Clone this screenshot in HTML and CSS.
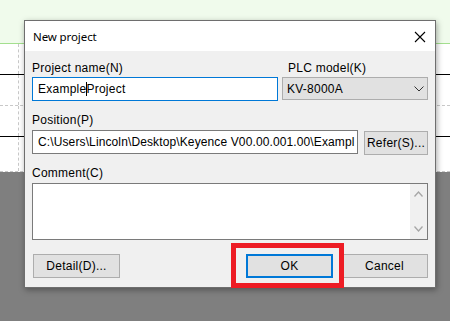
FILE: index.html
```
<!DOCTYPE html>
<html lang="en">
<head>
    <meta charset="UTF-8">
    <title>New project</title>
    <link rel="stylesheet" href="styles.css">
</head>
<body>
    <div class="desktop">
        <div class="ribbon"></div>
        <div class="sheet">
            <div class="sheet-row line-solid"><span class="gutter"></span></div>
            <div class="sheet-row line-dashed"><span class="gutter"></span></div>
            <div class="sheet-row line-solid"><span class="gutter"></span></div>
            <div class="sheet-row tall line-dashed"><span class="gutter"></span></div>
        </div>
        <div class="backdrop"></div>

        <div class="dialog">
            <div class="title-bar">
                <span class="title">New project</span>
                <svg class="close" width="12" height="12" viewBox="0 0 12 12">
                    <path d="M1 1 L11 11 M11 1 L1 11" stroke="#000" stroke-width="1.1" fill="none"/>
                </svg>
            </div>

            <div class="dialog-body">
                <div class="top-row">
                    <div class="field-group">
                        <div class="label">Project name(N)</div>
                        <div class="text-field focused">Example<span class="caret"></span>Project</div>
                    </div>
                    <div class="field-group">
                        <div class="label label-shift">PLC model(K)</div>
                        <div class="select">
                            <span>KV-8000A</span>
                            <svg width="10" height="6" viewBox="0 0 10 6">
                                <path d="M0.5 0.5 L5 5 L9.5 0.5" stroke="#333" stroke-width="1" fill="none"/>
                            </svg>
                        </div>
                    </div>
                </div>

                <div class="label label-gap">Position(P)</div>
                <div class="path-row">
                    <div class="text-field path">C:\Users\Lincoln\Desktop\Keyence V00.00.001.00\Exampl</div>
                    <div class="button refer">Refer(S)...</div>
                </div>

                <div class="label label-gap-sm">Comment(C)</div>
                <div class="comment">
                    <div class="scrollbar">
                        <svg width="9" height="6" viewBox="0 0 9 6">
                            <path d="M0.5 5.5 L4.5 1 L8.5 5.5" stroke="#a6a6a6" stroke-width="1.3" fill="none"/>
                        </svg>
                        <svg width="9" height="6" viewBox="0 0 9 6">
                            <path d="M0.5 0.5 L4.5 5 L8.5 0.5" stroke="#a6a6a6" stroke-width="1.3" fill="none"/>
                        </svg>
                    </div>
                </div>

                <div class="button-row">
                    <div class="button detail">Detail(D)...</div>
                    <div class="button-pair">
                        <div class="button ok">OK</div>
                        <div class="button">Cancel</div>
                    </div>
                </div>
            </div>
        </div>
    </div>
</body>
</html>
```

FILE: styles.css
```
:root {
    --ribbon-green: #f0fbec;
    --ribbon-line: #a3df8e;
    --backdrop-gray: #7f7f7f;
    --dialog-face: #f0f0f0;
    --button-face: #e1e1e1;
    --button-border: #adadad;
    --field-border: #7a7a7a;
    --accent-blue: #0078d7;
    --mark-red: #ed1c24;
}

* {
    margin: 0;
    padding: 0;
    box-sizing: border-box;
}

body {
    width: 450px;
    height: 321px;
    overflow: hidden;
    font-family: 'Liberation Sans', Arial, sans-serif;
    font-size: 12px;
    color: #000;
}

.desktop {
    position: relative;
    height: 321px;
    display: flex;
    flex-direction: column;
}

/* background: editor window behind the dialog */
.ribbon {
    height: 44px;
    background-color: var(--ribbon-green);
    border-bottom: 1px solid var(--ribbon-line);
}

.sheet {
    background-color: #fff;
    display: flex;
    flex-direction: column;
}

.sheet-row {
    height: 31px;
    display: flex;
}

.sheet-row.tall {
    height: 35px;
}

.line-solid {
    border-bottom: 1px solid #000;
}

.line-dashed {
    border-bottom: 1px dashed #c8c8c8;
}

.gutter {
    width: 19px;
    border-right: 1px dashed #c8c8c8;
}

.backdrop {
    flex: 1;
    background-color: var(--backdrop-gray);
}

/* dialog */
.dialog {
    position: absolute;
    left: 24px;
    top: 20px;
    width: 412px;
    height: 268px;
    border: 1px solid #6e6e6e;
    background-color: var(--dialog-face);
    box-shadow: 1px 2px 6px rgba(0, 0, 0, 0.35);
}

.title-bar {
    height: 30px;
    background-color: #fff;
    display: flex;
    align-items: center;
    justify-content: space-between;
    padding: 0 9px 0 8px;
}

.title {
    font-family: 'Noto Sans', sans-serif;
    font-size: 11.5px;
    letter-spacing: -0.1px;
    padding-top: 1px;
}

.close {
    margin-top: 1px;
}

.dialog-body {
    padding: 10px 7px 10px 7px;
}

.label {
    line-height: 14px;
    height: 14px;
    letter-spacing: 0.25px;
    white-space: nowrap;
}

.label-shift {
    margin-left: 6px;
}

.label-gap {
    margin-top: 12px;
    margin-bottom: 3px;
}

.label-gap-sm {
    margin-top: 11px;
    margin-bottom: 3px;
}

.top-row {
    display: grid;
    grid-template-columns: 246px 146px;
    column-gap: 4px;
}

.top-row .label {
    margin-bottom: 2px;
}

.text-field {
    height: 24px;
    background-color: #fff;
    border: 1px solid var(--field-border);
    padding: 0 5px;
    line-height: 22px;
    letter-spacing: 0.25px;
    white-space: nowrap;
    overflow: hidden;
}

.text-field.focused {
    border-color: var(--accent-blue);
}

.caret {
    display: inline-block;
    width: 0;
    height: 14px;
    border-left: 1px solid #000;
    margin-right: -1px;
    vertical-align: -3px;
}

.select {
    height: 23px;
    background-color: var(--button-face);
    border: 1px solid var(--button-border);
    display: flex;
    align-items: center;
    justify-content: space-between;
    padding: 0 3px 0 4px;
    letter-spacing: 0.25px;
}

.select svg {
    margin-top: 1px;
}

.path-row {
    display: flex;
    gap: 6px;
}

.text-field.path {
    width: 326px;
    letter-spacing: 0.12px;
}

.button {
    height: 24px;
    width: 87px;
    background-color: var(--button-face);
    border: 1px solid var(--button-border);
    display: flex;
    align-items: center;
    justify-content: center;
    letter-spacing: 0.25px;
}

.button.refer {
    width: 64px;
    margin-top: 1px;
}

.comment {
    height: 57px;
    background-color: #fff;
    border: 1px solid var(--field-border);
    display: flex;
    justify-content: flex-end;
}

.scrollbar {
    width: 17px;
    background-color: var(--dialog-face);
    display: flex;
    flex-direction: column;
    justify-content: space-between;
    align-items: center;
    padding: 7px 0 7px;
}

.button-row {
    margin-top: 14px;
    display: flex;
    justify-content: space-between;
}

.button.detail {
    margin-left: 1px;
}

.button-pair {
    display: flex;
    gap: 8px;
}

.button.ok {
    position: relative;
    border: 2px solid var(--accent-blue);
}

/* red annotation frame around the OK button */
.button.ok::after {
    content: '';
    position: absolute;
    top: -13px;
    right: -13px;
    bottom: -12px;
    left: -17px;
    border: 5px solid var(--mark-red);
}
```
